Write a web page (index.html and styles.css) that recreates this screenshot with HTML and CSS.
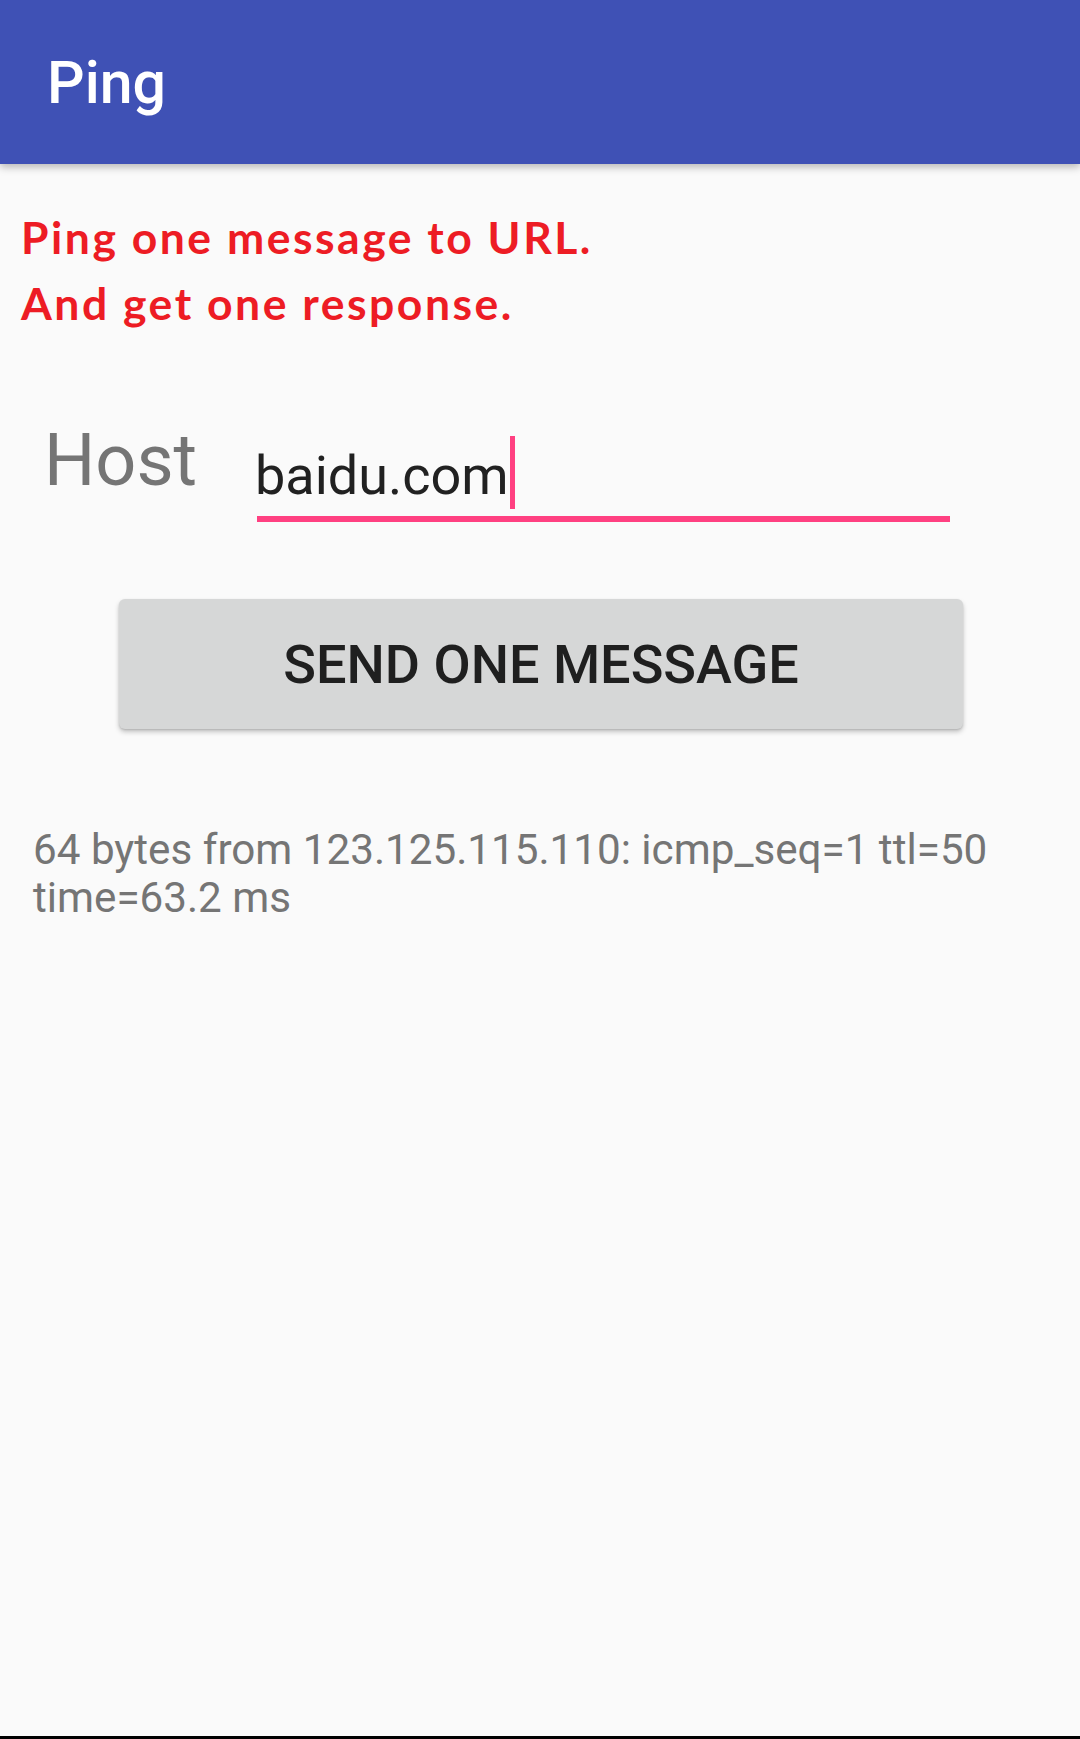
FILE: index.html
```html
<!DOCTYPE html>
<html>
<head>
<meta charset="utf-8">
<link rel="stylesheet" href="styles.css">
</head>
<body>
<header class="appbar"><h1 class="title">Ping</h1></header>
<main class="content">
  <p class="intro">Ping one message to URL.<br>And get one response.</p>
  <div class="host-row">
    <span class="host-label">Host</span>
    <div class="host-field"><span class="host-value">baidu.com</span><span class="cursor"></span></div>
  </div>
  <button class="send-btn">SEND ONE MESSAGE</button>
  <p class="result">64 bytes from 123.125.115.110: icmp_seq=1 ttl=50 time=63.2 ms</p>
</main>
<div class="navbar-edge"></div>
</body>
</html>
```
FILE: styles.css
```css
html, body {
  margin: 0;
  padding: 0;
}
body {
  background: #fafafa;
  height: 1739px;
  display: flex;
  flex-direction: column;
  font-family: Roboto, "Noto Sans", sans-serif;
  overflow: hidden;
}
.appbar {
  height: 164px;
  flex: none;
  background: #3f51b5;
  display: flex;
  align-items: center;
  padding-left: 47px;
  box-shadow: 0 3px 8px rgba(0, 0, 0, 0.28);
  position: relative;
  z-index: 1;
}
.title {
  margin: 0;
  color: #ffffff;
  font-family: Roboto, sans-serif;
  font-weight: 500;
  font-size: 59px;
  line-height: 1;
}
.content {
  flex: 1;
  display: flex;
  flex-direction: column;
  align-items: flex-start;
}
.intro {
  margin: 40px 0 0 21px;
  color: #ed1c24;
  font-family: Lato, "Noto Sans", sans-serif;
  font-weight: 700;
  font-size: 44.5px;
  line-height: 66px;
  letter-spacing: 2.5px;
}
.host-row {
  display: flex;
  align-items: flex-start;
  margin-top: 89px;
}
.host-label {
  width: 213px;
  margin-left: 44px;
  color: #757575;
  font-size: 72px;
  line-height: 1;
}
.host-field {
  width: 693px;
  margin-top: 11px;
  padding-bottom: 7px;
  border-bottom: 6px solid #ff4081;
  font-size: 54px;
  line-height: 1;
  color: #212121;
}
.host-value {
  margin-left: -2px;
}
.cursor {
  display: inline-block;
  width: 5px;
  height: 73px;
  background: #ff4081;
  vertical-align: -15px;
  margin-left: 1px;
}
.send-btn {
  margin: 77px 0 0 119px;
  width: 844px;
  height: 130px;
  border: none;
  border-radius: 6px;
  background: #d6d7d7;
  color: #1f1f1f;
  font-family: Roboto, sans-serif;
  font-weight: 500;
  font-size: 54px;
  box-shadow: 0 3px 5px rgba(0, 0, 0, 0.22), 0 1px 2px rgba(0, 0, 0, 0.12);
  padding: 0;
}
.result {
  margin: 97px 0 0 33px;
  width: 1010px;
  color: #757575;
  font-size: 42.2px;
  line-height: 48px;
}
.navbar-edge {
  height: 3px;
  background: #000;
  flex: none;
}
```
